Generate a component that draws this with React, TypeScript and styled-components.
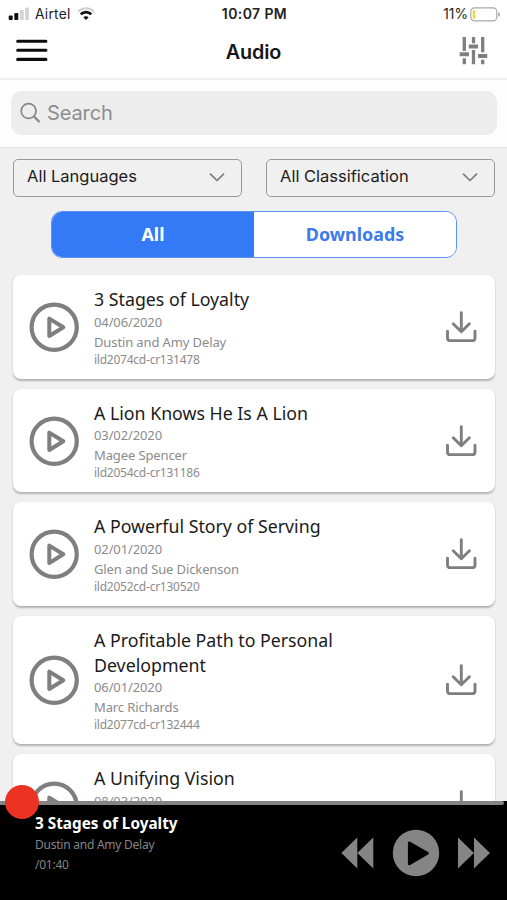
import React from 'react';
import styled, { createGlobalStyle } from 'styled-components';

const GlobalStyle = createGlobalStyle`
  * { box-sizing: border-box; }
  body { margin: 0; background: #f0f0f0; }
  button { appearance: none; border: 0; padding: 0; margin: 0; background: none; font: inherit; color: inherit; display: block; }
  svg { display: block; flex: none; }
`;

const system = `Inter, "Liberation Sans", sans-serif`;
const noto = `"Noto Sans", "Open Sans", sans-serif`;
const gray = '#7f7f7f';

const Screen = styled.div`
  width: 507px;
  height: 900px;
  display: flex;
  flex-direction: column;
  overflow: hidden;
  background: #f0f0f0;
  font-family: ${noto};
`;

const StatusBar = styled.div`
  height: 28px;
  flex: none;
  display: grid;
  grid-template-columns: 1fr auto 1fr;
  align-items: center;
  padding: 0 6px 0 8px;
  background: #fff;
  color: #222;
  font: 400 13.8px/28px ${system};
`;

const StatusGroup = styled.div<{ $end?: boolean }>`
  display: flex;
  align-items: center;
  justify-content: ${(p) => (p.$end ? 'flex-end' : 'flex-start')};
  gap: ${(p) => (p.$end ? '2px' : '6px')};
`;

const Label = styled.span<{ $spacing?: number }>`
  white-space: nowrap;
  letter-spacing: ${(p) => p.$spacing ?? 0}px;
`;

const Clock = styled.span`
  font-weight: 600;
  font-size: 14px;
  letter-spacing: 0.4px;
`;

const Header = styled.header`
  height: 52px;
  flex: none;
  display: grid;
  grid-template-columns: 1fr auto 1fr;
  padding: 0 19px 0 16px;
  background: #fff;
  border-bottom: 2px solid #eeeeee;
`;

const HeaderButton = styled.button<{ $end?: boolean }>`
  justify-self: ${(p) => (p.$end ? 'end' : 'start')};
  align-self: start;
  padding-top: ${(p) => (p.$end ? 8 : 10)}px;
`;

const PageTitle = styled.h1`
  margin: 0;
  padding-left: 3px;
  color: #151515;
  font: 600 19.8px/48px ${system};
  letter-spacing: -0.1px;
`;

const SearchArea = styled.div`
  height: 68px;
  flex: none;
  padding: 11px 10px 12px 11px;
  background: #fdfdfd;
  border-bottom: 1px solid #e2e2e2;
`;

const SearchBox = styled.label`
  height: 44px;
  display: flex;
  align-items: center;
  gap: 6px;
  padding-left: 9px;
  border-radius: 11px;
  background: #ededed;
  color: #8d8d8d;
  font: 400 20px/44px ${system};
  letter-spacing: -0.1px;
`;

const Filters = styled.div`
  flex: none;
  display: grid;
  grid-template-columns: 1fr 1fr;
  gap: 24px;
  padding: 11px 12px 0 13px;
`;

const Select = styled.button`
  height: 38px;
  display: flex;
  align-items: center;
  justify-content: space-between;
  padding: 0 16px 3px 13px;
  border: 1.5px solid #999;
  border-radius: 5px;
  color: #1c1c1c;
  font: 400 16.5px/32px ${system};
`;

const SelectLabel = styled.span`
  padding-bottom: 2px;
`;

const Segmented = styled.div`
  flex: none;
  height: 47px;
  margin: 14px 50px 0 51px;
  display: grid;
  grid-template-columns: 1fr 1fr;
  border: 1.5px solid #5d92ef;
  border-radius: 11px;
  overflow: hidden;
`;

const Segment = styled.button<{ $active?: boolean }>`
  padding: 0;
  background: ${(p) => (p.$active ? '#347af6' : '#fff')};
  color: ${(p) => (p.$active ? '#fff' : '#3b7bea')};
  font: 700 17.9px/43px ${noto};
`;

const List = styled.main`
  flex: 1;
  min-height: 0;
  overflow: hidden;
  display: flex;
  flex-direction: column;
  gap: 10px;
  padding: 17px 12px 0 13px;
`;

const Card = styled.article`
  flex: none;
  display: grid;
  grid-template-columns: 50px 1fr 32px;
  align-items: center;
  column-gap: 15px;
  padding: 12.3px 18px 11.8px 16px;
  border-radius: 8px;
  background: #fff;
  box-shadow: 0 1.5px 2px rgba(0, 0, 0, 0.26);
`;

const TrackTitle = styled.h2`
  margin: 0;
  max-width: 270px;
  color: #1b1b1b;
  font: 400 17.75px/24.5px ${noto};
`;

const Meta = styled.div`
  color: #8b8b8b;
  font-size: 13px;
  line-height: 20px;
  letter-spacing: -0.12px;
`;

const TrackCode = styled(Meta)`
  font-size: 12px;
  line-height: 15px;
  letter-spacing: -0.24px;
`;

const Player = styled.footer`
  position: relative;
  flex: none;
  height: 99px;
  display: flex;
  justify-content: space-between;
  padding: 10px 16px 0 35px;
  background: #000;
`;

const ProgressTrack = styled.div`
  position: absolute;
  left: 0;
  right: 3px;
  top: 0;
  height: 4px;
  border-radius: 0 2px 2px 0;
  background: #858585;
`;

const ProgressThumb = styled.div`
  position: absolute;
  left: 5px;
  top: -16px;
  width: 34px;
  height: 34px;
  border-radius: 50%;
  background: #ec3323;
`;

const NowPlaying = styled.div`
  color: #858585;
  font-size: 12px;
  line-height: 20px;
  letter-spacing: -0.24px;
`;

const NowTitle = styled.div`
  color: #fff;
  font-size: 15.3px;
  line-height: 24px;
  letter-spacing: 0;
  font-weight: 700;
`;

const Controls = styled.div`
  height: 84px;
  display: flex;
  align-items: center;
  gap: 18px;
`;

const Signal = () => (
  <svg width="21" height="14" viewBox="0 0 21 14">
    <rect x="0.7" y="8.5" width="4" height="4.5" rx="1" fill="#111" />
    <rect x="6.3" y="6" width="4" height="7" rx="1" fill="#111" />
    <rect x="11.8" y="3" width="4" height="10" rx="1" fill="#d5d5d5" />
    <rect x="17" y="0.5" width="4" height="12.5" rx="1" fill="#d5d5d5" />
  </svg>
);

const Wifi = () => (
  <svg width="18" height="14" viewBox="0 0 18 14" fill="none">
    <path d="M1 4.6C5.5.2 12.5.2 17 4.6" stroke="#cfcfcf" strokeWidth="2" />
    <path d="M3.7 7.3c3-2.9 7.6-2.9 10.6 0" stroke="#111" strokeWidth="2.7" />
    <path d="M6.3 10.3c1.6-1.5 3.8-1.5 5.4 0L9 13z" fill="#111" />
  </svg>
);

const Battery = () => (
  <svg width="31" height="15" viewBox="0 0 31 15" fill="none">
    <rect x="0.8" y="0.8" width="26" height="13" rx="3.6" fill="#fff" stroke="#aaa" strokeWidth="1.2" />
    <rect x="2.8" y="3" width="2.2" height="8.8" rx="1" fill="#f7cf45" />
    <path d="M28.2 5c2.4.8 2.4 4 0 4.8z" fill="#aaa" />
  </svg>
);

const Menu = () => (
  <svg width="32" height="25" viewBox="0 0 32 25" stroke="#0c0c0c" strokeWidth="3.1" strokeLinecap="round">
    <path d="M1.7 3.2h28.2M1.7 12.3h28.2M1.7 21.4h28.2" />
  </svg>
);

const Sliders = () => (
  <svg width="29" height="30" viewBox="0 0 29 30" stroke={gray} strokeLinecap="butt">
    <path strokeWidth="3.3" d="M5.3 1v14M5.3 22.3v6M14.5 1v6.2M14.5 14v14.3M23.7 1v15.3M23.7 23.7v4.6" />
    <path strokeWidth="4" d="M.7 18.3H10M9.8 10.6H19.1M19 19.9h9.2" />
  </svg>
);

const Magnifier = () => (
  <svg width="21" height="22" viewBox="0 0 21 22" fill="none" stroke="#858585" strokeWidth="1.7" strokeLinecap="round">
    <circle cx="8.6" cy="9" r="7.4" />
    <path d="m14 14.5 5 5.1" strokeWidth="2.1" />
  </svg>
);

const Chevron = () => (
  <svg width="16" height="10" viewBox="0 0 16 10" fill="none" stroke="#7b7b7b" strokeWidth="1.7" strokeLinecap="round" strokeLinejoin="round">
    <path d="m1.5 2.2 6.5 6.3 6.5-6.3" />
  </svg>
);

const PlayOutline = () => (
  <svg width="50" height="50" viewBox="0 0 50 50" fill="none" stroke={gray} strokeLinejoin="round">
    <circle cx="25.2" cy="25.3" r="22.6" strokeWidth="4.2" />
    <path d="M20.3 16.6v17.4L34.3 25.3z" strokeWidth="4" />
  </svg>
);

const Download = () => (
  <svg width="32" height="32" viewBox="0 0 32 32" fill="none" stroke={gray} strokeWidth="2.9" strokeLinecap="round" strokeLinejoin="round">
    <path d="M16.3 1.8v19M8.2 12.7l8.1 8.1 8.1-8.1" />
    <path d="M2.5 20.2v6.7q0 2.7 2.7 2.7h22.1q2.7 0 2.7-2.7v-6.7" />
  </svg>
);

const Rewind = () => (
  <svg width="33" height="32" viewBox="0 0 33 32" fill="#858585">
    <path d="M.3 16 16.3.5v31zM16.3 16 32.3.5v31z" />
  </svg>
);

const Forward = () => (
  <svg width="33" height="32" viewBox="0 0 33 32" fill="#858585">
    <path d="M32 16 16 .5v31zM16 16 0 .5v31z" />
  </svg>
);

const PlayFilled = () => (
  <svg width="48" height="48" viewBox="0 0 48 48">
    <circle cx="24" cy="24" r="23.2" fill="#858585" />
    <path d="M17.4 14v20.8L35.3 24.3z" fill="#000" stroke="#000" strokeWidth="3" strokeLinejoin="round" />
  </svg>
);

const tracks = [
  { title: '3 Stages of Loyalty', date: '04/06/2020', author: 'Dustin and Amy Delay', code: 'ild2074cd-cr131478' },
  { title: 'A Lion Knows He Is A Lion', date: '03/02/2020', author: 'Magee Spencer', code: 'ild2054cd-cr131186' },
  { title: 'A Powerful Story of Serving', date: '02/01/2020', author: 'Glen and Sue Dickenson', code: 'ild2052cd-cr130520' },
  { title: 'A Profitable Path to Personal Development', date: '06/01/2020', author: 'Marc Richards', code: 'ild2077cd-cr132444' },
  { title: 'A Unifying Vision', date: '08/03/2020', author: '', code: '' },
];

const TrackCard = ({ track }: { track: (typeof tracks)[number] }) => (
  <Card>
    <button aria-label="Play"><PlayOutline /></button>
    <div>
      <TrackTitle>{track.title}</TrackTitle>
      <Meta>{track.date}</Meta>
      <Meta>{track.author || '\u00a0'}</Meta>
      <TrackCode>{track.code || '\u00a0'}</TrackCode>
    </div>
    <button aria-label="Download"><Download /></button>
  </Card>
);

export default function App() {
  return (
    <Screen>
      <GlobalStyle />
      <StatusBar>
        <StatusGroup>
          <Signal />
          <Label $spacing={0.25}>Airtel</Label>
          <Wifi />
        </StatusGroup>
        <Clock>10:07 PM</Clock>
        <StatusGroup $end>
          <Label>11%</Label>
          <Battery />
        </StatusGroup>
      </StatusBar>
      <Header>
        <HeaderButton aria-label="Menu"><Menu /></HeaderButton>
        <PageTitle>Audio</PageTitle>
        <HeaderButton $end aria-label="Filters"><Sliders /></HeaderButton>
      </Header>
      <SearchArea>
        <SearchBox><Magnifier />Search</SearchBox>
      </SearchArea>
      <Filters>
        <Select><SelectLabel>All Languages</SelectLabel><Chevron /></Select>
        <Select><SelectLabel>All Classification</SelectLabel><Chevron /></Select>
      </Filters>
      <Segmented>
        <Segment $active>All</Segment>
        <Segment>Downloads</Segment>
      </Segmented>
      <List>
        {tracks.map((track) => <TrackCard key={track.title} track={track} />)}
      </List>
      <Player>
        <ProgressTrack />
        <ProgressThumb />
        <NowPlaying>
          <NowTitle>3 Stages of Loyalty</NowTitle>
          <div>Dustin and Amy Delay</div>
          <div>/01:40</div>
        </NowPlaying>
        <Controls>
          <button aria-label="Rewind"><Rewind /></button>
          <button aria-label="Play"><PlayFilled /></button>
          <button aria-label="Fast forward"><Forward /></button>
        </Controls>
      </Player>
    </Screen>
  );
}
